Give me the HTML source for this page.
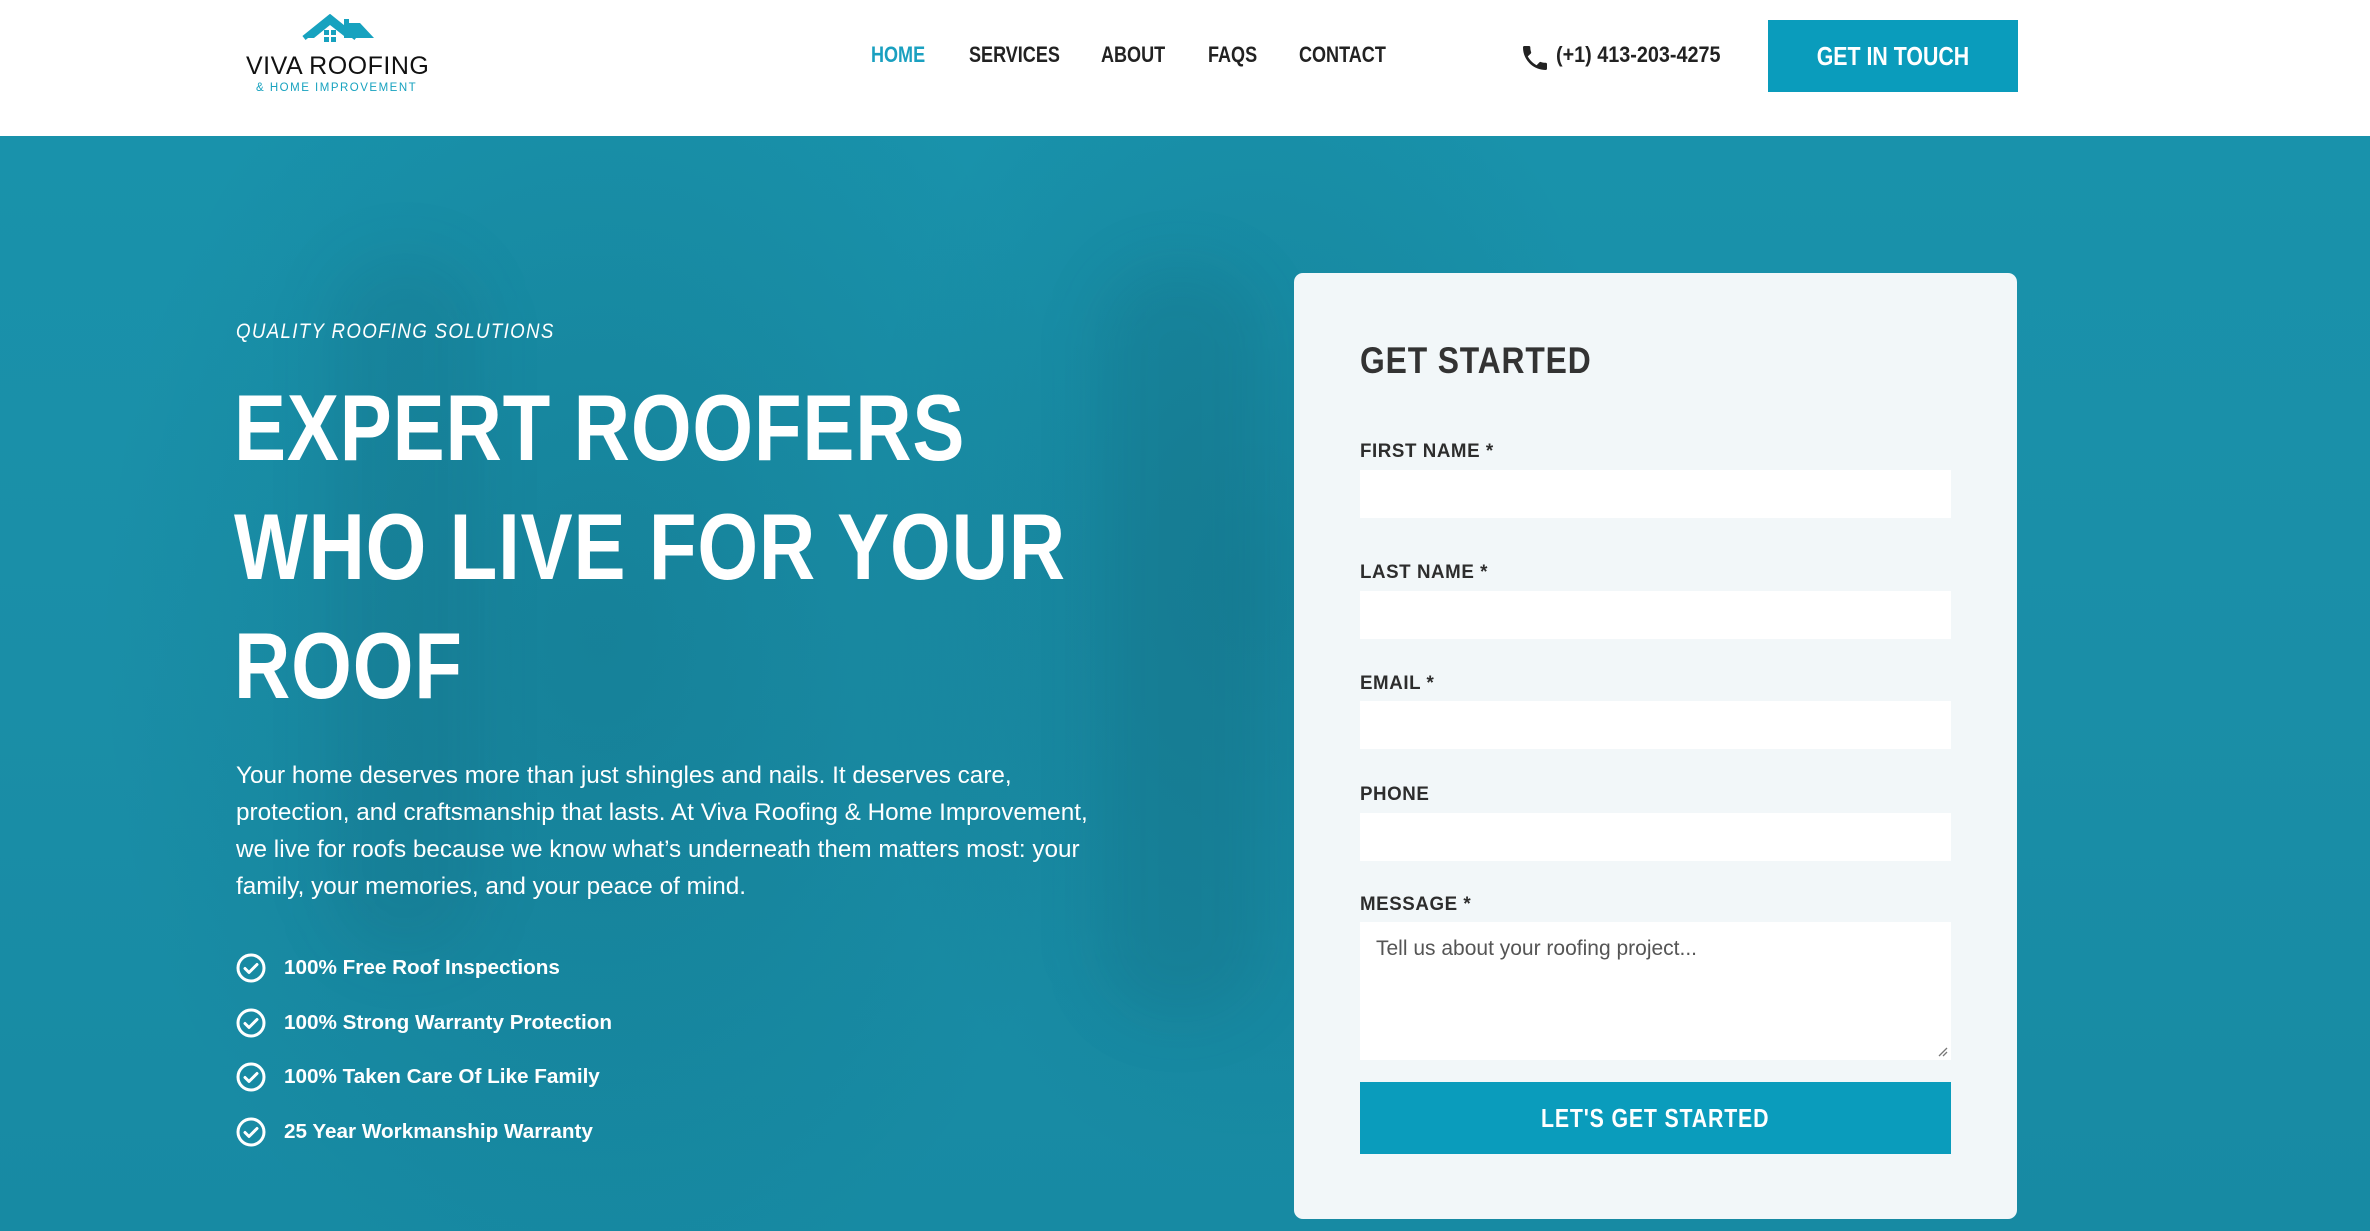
<!DOCTYPE html>
<html><head><meta charset="utf-8">
<style>
*{margin:0;padding:0;box-sizing:border-box}
body{width:2370px;height:1231px;overflow:hidden;font-family:"Liberation Sans",sans-serif;background:#fff;position:relative}
.cond{font-family:"Liberation Sans",sans-serif;font-weight:700}
.sx{display:inline-block;transform-origin:left center;white-space:nowrap}
header{position:absolute;left:0;top:0;width:2370px;height:136px;background:#fff}
.nav a{position:absolute;top:42px;font-size:22px;color:#222;text-decoration:none;transform:scaleX(.82);transform-origin:left center;white-space:nowrap}
.hero{position:absolute;left:0;top:136px;width:2370px;height:1095px;background:
radial-gradient(ellipse 500px 700px at 600px 500px,rgba(10,90,110,.25),transparent),
radial-gradient(ellipse 400px 600px at 1250px 450px,rgba(10,90,110,.25),transparent),
linear-gradient(180deg,#1992ab 0%,#1a8ea7 50%,#178aa3 100%);overflow:hidden}
label{position:absolute;left:1360px;font-size:19.5px;color:#2d2d2d;letter-spacing:.6px;transform:scaleX(.96);transform-origin:left center;white-space:nowrap}
.in{position:absolute;left:1360px;width:591px;height:48px;background:#fff}
.chk{position:absolute;left:236px;width:30px;height:30px}
.ci{position:absolute;left:284px;font-size:20.7px;font-weight:700;color:#fff;white-space:nowrap}
</style></head><body>
<header>
<svg style="position:absolute;left:300px;top:14px" width="76" height="32" viewBox="0 0 76 32">
<path d="M4 24 L30 3 L44 14 L44 5 L49 5 L49 9 L60 9 L74 24 Z" fill="#17a2bf"/>
<path d="M4 24 L30 3 L56 24" fill="none" stroke="#17a2bf" stroke-width="5"/>
<path d="M14 24 L30 11 L44 22 L44 32 L14 32Z" fill="#fff"/>
<rect x="24" y="16" width="5" height="5" fill="#17a2bf"/><rect x="31" y="16" width="5" height="5" fill="#17a2bf"/>
<rect x="24" y="23" width="5" height="5" fill="#17a2bf"/><rect x="31" y="23" width="5" height="5" fill="#17a2bf"/>
</svg>
<div style="position:absolute;left:246px;top:52px;font-size:25px;color:#111;letter-spacing:.5px;white-space:nowrap">VIVA ROOFING</div>
<div style="position:absolute;left:256px;top:82px;font-size:11.5px;color:#17a2bf;letter-spacing:1.5px;white-space:nowrap">&amp; HOME IMPROVEMENT</div>
<div class="nav cond">
<a style="left:871px;color:#1aa0c0">HOME</a>
<a style="left:969px">SERVICES</a>
<a style="left:1101px">ABOUT</a>
<a style="left:1208px">FAQS</a>
<a style="left:1299px">CONTACT</a>
</div>
<svg style="position:absolute;left:1519px;top:42px" width="32" height="32" viewBox="0 0 24 24"><path d="M6.6 10.8c1.4 2.8 3.8 5.1 6.6 6.6l2.2-2.2c.3-.3.7-.4 1-.2 1.1.4 2.3.6 3.6.6.6 0 1 .4 1 1V20c0 .6-.4 1-1 1C10.6 21 3 13.4 3 4c0-.6.4-1 1-1h3.5c.6 0 1 .4 1 1 0 1.3.2 2.5.6 3.6.1.3 0 .7-.2 1z" fill="#222"/></svg>
<div class="cond sx" style="position:absolute;left:1556px;top:42px;font-size:22px;color:#222;transform:scaleX(.9)">(+1) 413-203-4275</div>
<div class="cond" style="position:absolute;left:1768px;top:20px;width:250px;height:72px;background:#0a9cbc;color:#fff;font-size:26px;text-align:center;line-height:72px"><span class="sx" style="transform:scaleX(.82);transform-origin:center">GET IN TOUCH</span></div>
</header>
<div class="hero">
<div style="position:absolute;left:330px;top:120px;width:150px;height:700px;background:rgba(20,70,90,.1);border-radius:70px;filter:blur(30px)"></div>
<div style="position:absolute;left:1100px;top:130px;width:160px;height:750px;background:rgba(20,70,90,.12);border-radius:70px;filter:blur(30px)"></div>
</div>
<div class="cond sx" style="position:absolute;left:236px;top:320px;font-size:21px;font-style:italic;font-weight:400;color:#fff;letter-spacing:1.5px;transform:scaleX(.89)">QUALITY ROOFING SOLUTIONS</div>
<div class="cond sx" style="position:absolute;left:234px;top:368px;font-size:94px;line-height:119px;color:#fff;letter-spacing:1px;transform:scaleX(.83)">EXPERT ROOFERS<br>WHO LIVE FOR YOUR<br>ROOF</div>
<div style="position:absolute;left:236px;top:757px;width:880px;font-size:24.3px;line-height:37px;color:#fff">Your home deserves more than just shingles and nails. It deserves care,<br>protection, and craftsmanship that lasts. At Viva Roofing &amp; Home Improvement,<br>we live for roofs because we know what’s underneath them matters most: your<br>family, your memories, and your peace of mind.</div>
<svg class="chk" style="top:953px" viewBox="0 0 30 30"><circle cx="15" cy="15" r="13" fill="none" stroke="#fff" stroke-width="3"/><path d="M9 15.5l4 4 8-8" fill="none" stroke="#fff" stroke-width="3" stroke-linecap="round" stroke-linejoin="round"/></svg>
<div class="ci" style="top:956px">100% Free Roof Inspections</div>
<svg class="chk" style="top:1008px" viewBox="0 0 30 30"><circle cx="15" cy="15" r="13" fill="none" stroke="#fff" stroke-width="3"/><path d="M9 15.5l4 4 8-8" fill="none" stroke="#fff" stroke-width="3" stroke-linecap="round" stroke-linejoin="round"/></svg>
<div class="ci" style="top:1011px">100% Strong Warranty Protection</div>
<svg class="chk" style="top:1062px" viewBox="0 0 30 30"><circle cx="15" cy="15" r="13" fill="none" stroke="#fff" stroke-width="3"/><path d="M9 15.5l4 4 8-8" fill="none" stroke="#fff" stroke-width="3" stroke-linecap="round" stroke-linejoin="round"/></svg>
<div class="ci" style="top:1065px">100% Taken Care Of Like Family</div>
<svg class="chk" style="top:1117px" viewBox="0 0 30 30"><circle cx="15" cy="15" r="13" fill="none" stroke="#fff" stroke-width="3"/><path d="M9 15.5l4 4 8-8" fill="none" stroke="#fff" stroke-width="3" stroke-linecap="round" stroke-linejoin="round"/></svg>
<div class="ci" style="top:1120px">25 Year Workmanship Warranty</div>

<div style="position:absolute;left:1294px;top:273px;width:723px;height:946px;background:#f2f7f9;border-radius:9px"></div>
<div class="cond sx" style="position:absolute;left:1360px;top:340px;font-size:37px;color:#333;letter-spacing:1px;transform:scaleX(.86)">GET STARTED</div>
<label class="cond" style="top:440px">FIRST NAME *</label><div class="in" style="top:470px"></div>
<label class="cond" style="top:561px">LAST NAME *</label><div class="in" style="top:591px"></div>
<label class="cond" style="top:672px">EMAIL *</label><div class="in" style="top:701px"></div>
<label class="cond" style="top:783px">PHONE</label><div class="in" style="top:813px"></div>
<label class="cond" style="top:893px">MESSAGE *</label>
<div class="in" style="top:922px;height:138px;padding:15px 16px;font-size:21px;color:#555">Tell us about your roofing project...</div>
<svg style="position:absolute;left:1938px;top:1047px" width="10" height="10"><path d="M9 1L1 9M9 5L5 9" stroke="#777" stroke-width="1.3"/></svg>
<div class="cond" style="position:absolute;left:1360px;top:1082px;width:591px;height:72px;background:#0a9cbc;color:#fff;font-size:26px;text-align:center;line-height:72px;letter-spacing:1px"><span class="sx" style="transform:scaleX(.82);transform-origin:center">LET'S GET STARTED</span></div>
</body></html>
